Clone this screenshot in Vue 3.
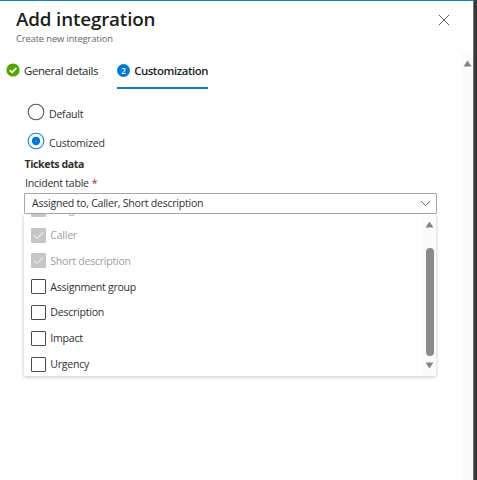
<script setup>
import { ref } from 'vue'

const mode = ref('customized')
const modes = [
  { id: 'default', label: 'Default' },
  { id: 'customized', label: 'Customized' },
]
const options = ref([
  { label: 'Assigned to', locked: true },
  { label: 'Caller', locked: true },
  { label: 'Short description', locked: true },
  { label: 'Assignment group', locked: false },
  { label: 'Description', locked: false },
  { label: 'Impact', locked: false },
  { label: 'Urgency', locked: false },
])
</script>

<template>
  <div class="page">
    <section class="panel">
      <header class="head">
        <div class="titles">
          <h1>Add integration</h1>
          <p>Create new integration</p>
        </div>
        <button class="close" aria-label="Close">
          <svg width="12" height="12" viewBox="0 0 12 12"><path d="M1 1L11 11M11 1L1 11" stroke="#5c5c5c" stroke-width="1" fill="none" /></svg>
        </button>
      </header>
      <div class="body">
        <main class="content">
          <nav class="tabs">
            <div class="tab">
              <svg width="14" height="14" viewBox="0 0 14 14"><circle cx="7" cy="7" r="6.6" fill="#57a300" /><path d="M3.7 7.1L6.1 9.4L10.4 4.9" stroke="#fff" stroke-width="1.6" fill="none" /></svg>
              <span>General details</span>
            </div>
            <div class="tab active">
              <span class="step">2</span>
              <span>Customization</span>
            </div>
          </nav>
          <div class="radios">
            <div v-for="m in modes" :key="m.id" class="radio" @click="mode = m.id">
              <svg width="18" height="18" viewBox="0 0 18 18">
                <circle cx="9" cy="9" r="7.8" fill="#fff" :stroke="mode === m.id ? '#1683dc' : '#555'" stroke-width="1.1" />
                <template v-if="mode === m.id">
                  <circle cx="9" cy="9" r="4.2" fill="#0078d4" />
                  <circle cx="9" cy="9" r="0.6" fill="#8cc4f0" />
                </template>
              </svg>
              <span>{{ m.label }}</span>
            </div>
          </div>
          <h2>Tickets data</h2>
          <label class="field-label"><span>Incident table</span><b>*</b></label>
          <div class="select">
            <span>Assigned to, Caller, Short description</span>
            <svg width="11" height="7" viewBox="0 0 11 7"><path d="M0.8 0.9L5.5 5.6L10.2 0.9" stroke="#666" stroke-width="1" fill="none" /></svg>
          </div>
          <div class="menu">
            <ul>
              <li v-for="o in options" :key="o.label" :class="{ locked: o.locked }">
                <i class="box">
                  <svg v-if="o.locked" width="15" height="15" viewBox="0 0 15 15"><path d="M3 7.6L6 10.5L12 4.5" stroke="#fff" stroke-width="1" fill="none" /></svg>
                </i>
                <span>{{ o.label }}</span>
              </li>
            </ul>
            <div class="bar">
              <svg width="9" height="7" viewBox="0 0 9 7"><path d="M4.5 0.5L8.5 6.5H0.5Z" fill="#858585" /></svg>
              <div class="thumb"></div>
              <svg width="9" height="7" viewBox="0 0 9 7"><path d="M4.5 6.5L8.5 0.5H0.5Z" fill="#858585" /></svg>
            </div>
          </div>
        </main>
        <div class="page-bar">
          <svg width="9" height="7" viewBox="0 0 9 7"><path d="M4.5 0.5L8.5 6.5H0.5Z" fill="#858585" /></svg>
        </div>
      </div>
    </section>
  </div>
</template>

<style>
body {
  margin: 0;
  overflow: hidden;
}
</style>

<style scoped>
* {
  box-sizing: border-box;
}
.page {
  width: 477px;
  height: 480px;
  background: #383838;
  font-family: "Open Sans", "Noto Sans", sans-serif;
  font-size: 10.6px;
  letter-spacing: -0.26px;
  color: #323130;
  white-space: nowrap;
}
.panel {
  width: 474px;
  height: 480px;
  display: flex;
  flex-direction: column;
  background: #fff;
  border-top: 1px solid #1580d3;
  border-right: 1px solid #777;
}
.head {
  height: 52px;
  flex: none;
  display: flex;
  justify-content: space-between;
  padding: 5px 23px 0 16px;
}
h1, h2, p, ul {
  margin: 0;
  padding: 0;
  font-weight: 400;
}
h1 {
  font-size: 18.8px;
  line-height: 26px;
  font-weight: 600;
  letter-spacing: -0.15px;
  color: #201f1e;
}
.head p {
  font-size: 9.4px;
  line-height: 14px;
  letter-spacing: -0.14px;
  color: #666;
}
.close {
  width: 12px;
  height: 12px;
  margin-top: 8px;
  padding: 0;
  border: 0;
  background: none;
}
svg {
  display: block;
  flex: none;
}
.body {
  flex: 1;
  display: flex;
}
.content {
  width: 461px;
}
.page-bar {
  width: 12px;
  padding: 7px 0 0 2px;
  background: #fbfbfb;
}
.tabs {
  display: flex;
  gap: 19px;
  padding-left: 6px;
}
.tab {
  height: 36px;
  display: flex;
  align-items: center;
  gap: 4px;
  border-bottom: 2px solid transparent;
  font-size: 11.4px;
  letter-spacing: -0.38px;
  color: #201f1e;
}
.tab.active {
  border-bottom-color: #0f7bd3;
  font-weight: 600;
  letter-spacing: -0.42px;
}
.tab .step {
  width: 13px;
  height: 13px;
  border-radius: 50%;
  background: #0078d4;
  color: #fff;
  font-size: 8px;
  line-height: 13px;
  letter-spacing: 0;
  text-align: center;
}
.radios {
  display: flex;
  flex-direction: column;
  gap: 11px;
  padding: 14.4px 0 0 27px;
}
.radio {
  height: 18px;
  display: flex;
  align-items: center;
  gap: 4px;
}
.radio span {
  padding-top: 3px;
}
h2 {
  margin: 5.1px 0 0 24.5px;
  font-size: 10.6px;
  line-height: 18px;
  font-weight: 700;
  letter-spacing: -0.4px;
}
.field-label {
  display: flex;
  gap: 3px;
  margin-left: 25px;
  line-height: 20px;
}
.field-label b {
  font-weight: 400;
  color: #a4262c;
}
.select {
  width: 413px;
  height: 20.5px;
  margin-left: 24px;
  display: flex;
  align-items: center;
  justify-content: space-between;
  padding: 0 5px 1px 7px;
  border: 1px solid #a6a6a6;
  border-radius: 1px;
}
.menu {
  width: 412px;
  height: 162px;
  margin-left: 24px;
  display: flex;
  justify-content: space-between;
  overflow: hidden;
  box-shadow: 0 1px 4px rgba(0, 0, 0, 0.24);
  clip-path: inset(0 -8px -8px -8px);
}
ul {
  list-style: none;
  margin-top: -17.6px;
  padding-left: 7px;
}
li {
  height: 25.8px;
  display: flex;
  align-items: center;
  gap: 4.3px;
}
li.locked {
  color: #a19f9d;
}
.box {
  width: 15px;
  height: 15px;
  border: 1px solid #4a4a4a;
  border-radius: 1px;
}
.locked .box {
  border: 0;
  background: #c8c6c4;
}
.bar {
  width: 13px;
  display: flex;
  flex-direction: column;
  align-items: center;
  padding-top: 7.4px;
  background: #fbfbfb;
}
.thumb {
  width: 8px;
  height: 108px;
  margin: 20px 0 6px;
  border-radius: 4px;
  background: #8a8a8a;
}
</style>
